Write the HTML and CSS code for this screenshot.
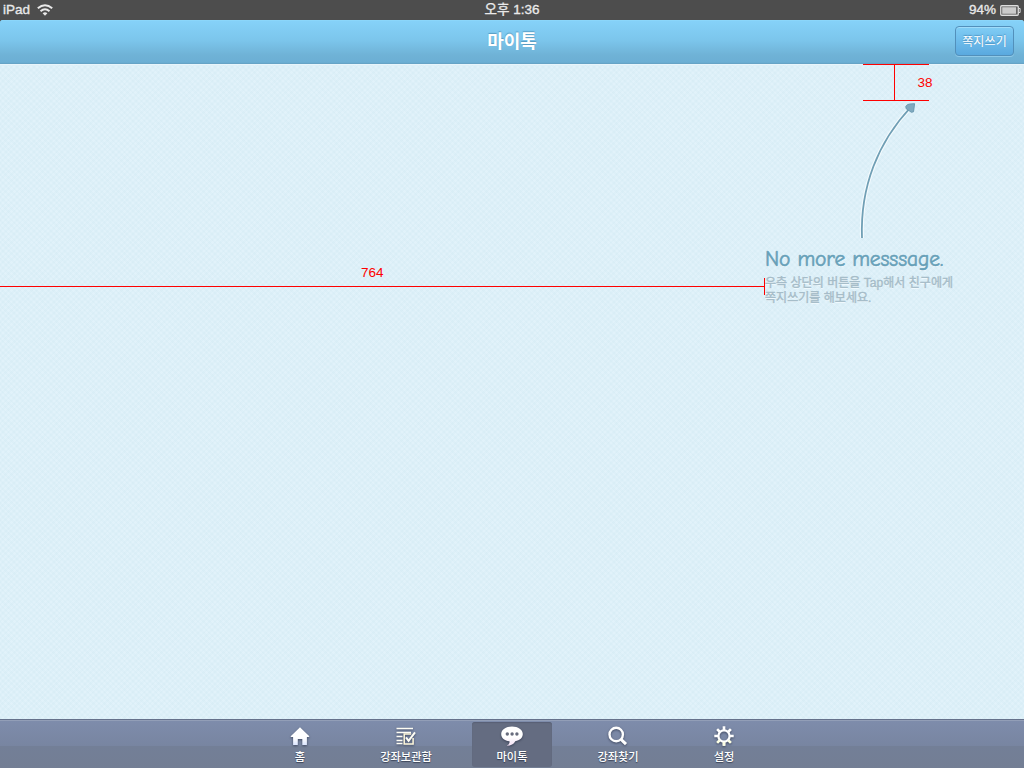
FILE: index.html
```html
<!DOCTYPE html>
<html lang="ko">
<head>
<meta charset="utf-8">
<title>마이톡</title>
<link rel="stylesheet" href="styles.css">
</head>
<body>
<div class="screen">
  <div class="status">
    <div class="status-left"><span class="device">iPad</span>
      <svg class="wifi" width="16" height="12" viewBox="0 0 16 12" fill="none" stroke="#e9e9e9"><path d="M.8 4.3Q8-1.7 15.2 4.3" stroke-width="2"/><path d="M3.5 7.3Q8 3.3 12.5 7.3" stroke-width="1.9"/><path d="M8 11.7L5.6 9.2Q8 7.4 10.4 9.2Z" fill="#e9e9e9" stroke="none"/></svg>
    </div>
    <div class="clock">오후 1:36</div>
    <div class="status-right"><span class="percent">94%</span>
      <svg width="21" height="11" viewBox="0 0 21 11"><rect x=".75" y=".75" width="17.5" height="9.5" rx="1" fill="none" stroke="#dedede" stroke-width="1.3"/><rect x="2.2" y="2.2" width="14" height="6.6" fill="#cbcbcb"/><path d="M18.8 3.5h1.3v4h-1.3" fill="none" stroke="#dedede"/></svg>
    </div>
  </div>
  <header class="navbar">
    <h1 class="title">마이톡</h1>
    <button class="compose"><span>쪽지쓰기</span></button>
  </header>
  <main class="content">
    <section class="empty">
      <svg class="arrow" width="70" height="140" viewBox="850 100 70 140">
        <path d="M862 238C860 187 878 142 911 107" fill="none" stroke="#f4fbfe" stroke-width="4"/>
        <path d="M862 238C860 187 878 142 911 107" fill="none" stroke="#709fb5" stroke-width="1.8"/>
        <path d="M905.8 106.5Q907 104 910 104L914.6 103.7L913.5 111.8L911.5 112.3L906.2 108.8Z" fill="#80aac0" stroke="#6b9ab1" stroke-width="1"/>
      </svg>
      <h2 class="headline">No more messsage.</h2>
      <p class="hint"><span class="hint-a">우측 상단의 버튼을 Tap해서 친구에게</span><br><span class="hint-b">쪽지쓰기를 해보세요.</span></p>
    </section>
  </main>
  <nav class="tabs">
    <a class="tab"><svg width="24" height="22" viewBox="0 0 24 22"><defs><linearGradient id="home" x2="0" y2="1"><stop offset=".6" stop-color="#fff"/><stop offset="1" stop-color="#dce6ff"/></linearGradient></defs><path d="M12 2.3L21.3 11.2Q21.4 12 20.5 12H18.9V20H14.3V14H9.8V20H5.1V12H3.2Q2.3 12 2.7 11.2Z" fill="url(#home)"/></svg><span class="label">홈</span></a>
    <a class="tab"><svg width="24" height="22" viewBox="0 0 24 22" fill="none" stroke="#fffef5"><path d="M2.5 3.5H19M2.5 7.5H17M2.5 11.5H8.5M2.5 15.5H8.5M2.5 18.5H8.5" stroke-width="1.5"/><path d="M17.2 9H10.2V19.1H19.1V13" stroke="#fff9dc" stroke-width="1.5"/><path d="M12 12.4L14.6 15.8L21 7.3" stroke-width="2"/></svg><span class="label">강좌보관함</span></a>
    <a class="tab active"><svg width="24" height="22" viewBox="0 0 24 22"><defs><linearGradient id="talk" x2="0" y2="1"><stop offset=".55" stop-color="#fff"/><stop offset="1" stop-color="#f3dff4"/></linearGradient></defs><path d="M12 1.5C5.8 1.5 1.2 4.7 1.2 9C1.2 13 4.5 15.7 9.4 16.2Q10.3 19 6.7 20.8Q13.2 20.5 15.2 16.2C20 15.4 22.8 12.7 22.8 9C22.8 4.7 18.2 1.5 12 1.5Z" fill="url(#talk)"/><g fill="#686c7d"><circle cx="7.3" cy="9" r="1.7"/><circle cx="12.1" cy="9" r="1.7"/><circle cx="16.9" cy="9" r="1.7"/></g></svg><span class="label">마이톡</span></a>
    <a class="tab"><svg width="24" height="22" viewBox="0 0 24 22" fill="none" stroke="#fff"><circle cx="10.2" cy="9.5" r="6.7" stroke-width="2.4"/><path d="M15 14.3L20 19.1" stroke-width="3"/></svg><span class="label">강좌찾기</span></a>
    <a class="tab"><svg width="24" height="22" viewBox="0 0 24 22" fill="none" stroke="#fff"><circle cx="12" cy="11" r="5.6" stroke-width="2.3"/><path d="M12 5V1.3M12 17v3.8M6 11H2.3M18 11h3.7M7.7 6.7L5.1 4.1M16.3 6.7L18.9 4.1" stroke-width="2.7"/><path d="M7.7 15.3L5.1 17.9M16.3 15.3L18.9 17.9M12 17v3.8" stroke="#fdffe4" stroke-width="2.7"/></svg><span class="label">설정</span></a>
  </nav>
  <svg class="measures" width="1024" height="768" viewBox="0 0 1024 768">
    <path d="M863 64.5H929M894.5 64V101M863 100.5H929M0 286.5H765M764.5 278V295" stroke="#f00" fill="none" shape-rendering="crispEdges"/>
    <text x="917.5" y="87">38</text>
    <text x="361" y="277">764</text>
  </svg>
</div>
</body>
</html>
```
FILE: styles.css
```css
* { box-sizing: border-box; }
body { margin: 0; font-family: "Liberation Sans", "Noto Sans CJK KR", sans-serif; }
.screen { position: relative; width: 1024px; height: 768px; display: flex; flex-direction: column; overflow: hidden; background: #4d4d4d; }
.status { height: 20px; flex: none; display: grid; grid-template-columns: 1fr auto 1fr; align-items: center; padding: 0 3px; color: #e9e9e9; font-size: 13.5px; line-height: 20px; background: #4d4d4d; }
.status-left, .status-right { display: flex; align-items: center; }
.status-left { gap: 7px; }
.status-right { justify-content: flex-end; gap: 4px; }
.device, .percent { -webkit-text-stroke: .35px #e9e9e9; }
.clock { -webkit-text-stroke: .35px #e9e9e9; white-space: nowrap; }
.navbar { height: 44px; flex: none; display: grid; grid-template-columns: 1fr auto 1fr; align-items: center; padding: 0 10px; border-radius: 3px 3px 0 0; background: linear-gradient(#86d2f9, #7cc6ec 45%, #6fb2d6 80%, #6cafd4 96%, #649fc0); box-shadow: inset 0 1px #8bd6fa; }
.title { grid-column: 2; margin: 0; padding-bottom: 4px; font: 700 18px/36px "Noto Sans CJK KR", sans-serif; color: #fff; text-shadow: 0 -1px 1px rgba(48,112,151,.5); }
.compose { justify-self: end; width: 59px; height: 30px; margin-top: -2px; padding: 0 0 1px; border: 1px solid #5290bb; border-radius: 4px; color: #fff; background: linear-gradient(#80cdf5, #5aa9df); box-shadow: inset 0 1px #a0dcfa, 0 1px #8fc9e7; font: 400 12px/26px "Noto Sans CJK KR", sans-serif; letter-spacing: .1px; white-space: nowrap; text-shadow: 0 -1px 1px rgba(43,104,152,.5); }
.content { flex: 1; background-color: #e1f2fa; background-image: repeating-linear-gradient(45deg, rgba(190,222,233,.12) 0 2px, transparent 2px 4px), repeating-linear-gradient(-45deg, rgba(190,222,233,.12) 0 2px, transparent 2px 4px); box-shadow: inset 0 1px #e8f5fb; }
.empty { width: 210px; margin-left: 765px; padding-top: 36px; }
.arrow { display: block; margin-left: 85px; }
.headline { margin: 5px 0 0; font: 500 21.5px/28px "Comic Neue", "Chalkboard", Lato, sans-serif; letter-spacing: -.1px; white-space: nowrap; color: #66a0b8; -webkit-text-stroke: .6px #66a0b8; text-shadow: 0 1px #f3fbff; }
.hint { margin: 3px 0 0; font: 400 12px/15px "Liberation Sans", "Noto Sans CJK KR", sans-serif; letter-spacing: .04px; color: #a5bcc8; text-shadow: 0 1px #f3fbff; white-space: nowrap; }
.hint-a, .hint-b { -webkit-text-stroke: .4px #a5bcc8; }
.tabs { height: 49px; flex: none; display: flex; justify-content: center; gap: 26px; padding-top: 3px; background: linear-gradient(#65718b 0 1px, #929eb7 1px 2px, #7e8cab 2px, #7885a1 55%, #737f97 56%, #737e94); }
.tab { width: 80px; height: 45px; padding-top: 3px; border-radius: 3px; display: flex; flex-direction: column; align-items: center; color: #fff; }
.active { background: #646c81; box-shadow: inset 0 1px 1px #586075; }
.tab svg { flex: none; filter: drop-shadow(0 1px 1px rgba(35,43,63,.65)); }
.label { font: 500 11.2px/15px "Noto Sans CJK KR", sans-serif; margin-top: 2px; white-space: nowrap; text-shadow: 0 1px 1px rgba(35,43,63,.7); }
.measures { position: absolute; left: 0; top: 0; pointer-events: none; font: 13.5px "Liberation Sans", sans-serif; fill: #f00; }
```
